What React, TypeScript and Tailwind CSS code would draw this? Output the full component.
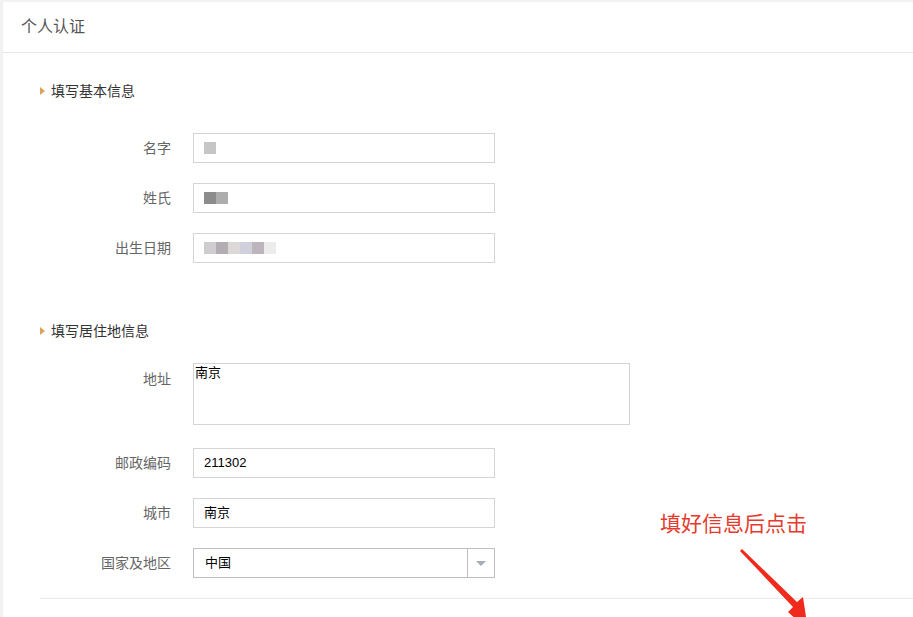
const font = { fontFamily: '"Liberation Sans", "Noto Sans CJK SC", sans-serif' }

function SectionTitle({ children }: { children: string }) {
  return (
    <div className="flex items-center gap-[6px] text-[14px] text-[#333] h-5">
      <span className="w-0 h-0 border-y-[4px] border-y-transparent border-l-[5px] border-l-[#d9a55c]" />
      <span>{children}</span>
    </div>
  )
}

function Row({ label, children }: { label: string; children: React.ReactNode }) {
  return (
    <div className="flex items-center">
      <div className="w-[131px] text-right text-[14px] text-[#666]">{label}</div>
      <div className="ml-[22px]">{children}</div>
    </div>
  )
}

function Box({ children }: { children?: React.ReactNode }) {
  return (
    <div className="w-[302px] h-[30px] border border-[#d4d4d4] bg-white flex items-center px-[10px] text-[13px] text-black">
      {children}
    </div>
  )
}

export default function App() {
  return (
    <div style={font} className="relative w-[913px] h-[617px] overflow-hidden bg-[#f2f2f2] pt-[2px] pl-[2px]">
      <div className="h-full bg-white border-l border-[#f0f0f0]">
        {/* Header */}
        <div className="h-[51px] border-b border-[#e8e8e8] flex items-center pl-[18px] text-[16px] text-[#555]">
          个人认证
        </div>

        <div className="pl-[37px] pt-[28px]">
          <SectionTitle>填写基本信息</SectionTitle>

          <div className="mt-[32px] flex flex-col gap-[20px]">
            <Row label="名字">
              <Box>
                <span className="w-[12px] h-[12px] bg-[#c6c6c6] blur-[0.5px]" />
              </Box>
            </Row>
            <Row label="姓氏">
              <Box>
                <span className="w-[12px] h-[12px] bg-[#8c8c8c]" />
                <span className="w-[12px] h-[12px] bg-[#adadad]" />
              </Box>
            </Row>
            <Row label="出生日期">
              <Box>
                <span className="w-[12px] h-[12px] bg-[#d0cdd0]" />
                <span className="w-[12px] h-[12px] bg-[#b3aeb3]" />
                <span className="w-[12px] h-[12px] bg-[#dcd8d8]" />
                <span className="w-[12px] h-[12px] bg-[#cfd0dc]" />
                <span className="w-[12px] h-[12px] bg-[#bcb6bc]" />
                <span className="w-[12px] h-[12px] bg-[#ececec]" />
              </Box>
            </Row>
          </div>

          <div className="mt-[58px]">
            <SectionTitle>填写居住地信息</SectionTitle>
          </div>

          <div className="mt-[22px] flex items-start">
            <div className="w-[131px] text-right text-[14px] text-[#666] pt-[6px]">地址</div>
            <div className="ml-[22px] w-[437px] h-[62px] border border-[#d4d4d4] px-[1px] text-[13px] leading-[16px] pt-[1px] text-black">
              南京
            </div>
          </div>

          <div className="mt-[23px] flex flex-col gap-[20px]">
            <Row label="邮政编码">
              <Box>211302</Box>
            </Row>
            <Row label="城市">
              <Box>南京</Box>
            </Row>
            <Row label="国家及地区">
              <div className="w-[302px] h-[30px] border border-[#bfbfbf] bg-white flex items-center text-[13px] text-black">
                <span className="flex-1 pl-[11px]">中国</span>
                <span className="w-[27px] h-full border-l border-[#bfbfbf] flex items-center justify-center">
                  <span className="w-0 h-0 border-x-[5px] border-x-transparent border-t-[5px] border-t-[#a6adb8]" />
                </span>
              </div>
            </Row>
          </div>

          <div className="mt-[20px] border-t border-[#ebebeb]" />
        </div>
      </div>

      {/* Annotation */}
      <div className="absolute left-[660px] top-[510px] text-[21px] leading-[28px] text-[#e63a2e]">
        填好信息后点击
      </div>
      <svg className="absolute left-0 top-0" width="913" height="617" viewBox="0 0 913 617">
        <polygon points="740,551 742,549 797,602 803,597 808,630 788,612 793,607" fill="#f02a1c" />
      </svg>
    </div>
  )
}
